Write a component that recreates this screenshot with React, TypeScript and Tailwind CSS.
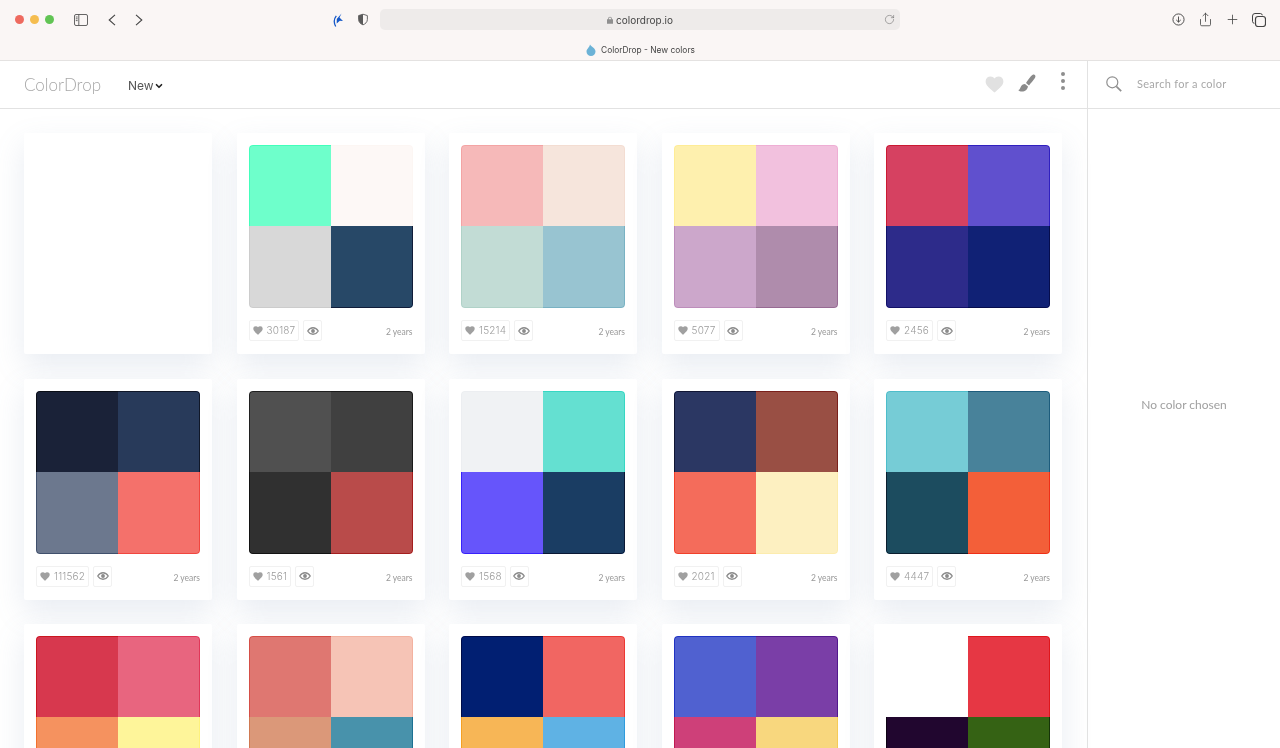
import { ChevronDown, Plus, RotateCw, Share } from 'lucide-react'

type Palette = {
  colors?: string[]
  likes?: string
}

// the third row's footers sit below the fold, so they carry no likes
const palettes: Palette[] = [
  {},
  { colors: ['#6effcb', '#fdf8f6', '#d8d8d8', '#274867'], likes: '30187' },
  { colors: ['#f6b9b9', '#f6e5dc', '#c2dcd5', '#98c4d1'], likes: '15214' },
  { colors: ['#fef0ae', '#f2c1de', '#cca7cb', '#af8cac'], likes: '5077' },
  { colors: ['#d64161', '#6050ce', '#2d2b8a', '#102175'], likes: '2456' },
  { colors: ['#1a2238', '#283a5a', '#6c788e', '#f4716b'], likes: '111562' },
  { colors: ['#505050', '#404040', '#303030', '#b94b4a'], likes: '1561' },
  { colors: ['#f0f2f4', '#64e0d1', '#6655fb', '#1a3d63'], likes: '1568' },
  { colors: ['#2b3763', '#994f44', '#f46c5b', '#fdf0c1'], likes: '2021' },
  { colors: ['#76ccd6', '#48829a', '#1c4c5f', '#f35f39'], likes: '4447' },
  { colors: ['#d7384e', '#e8657f', '#f5925f', '#fef59a'] },
  { colors: ['#df7771', '#f6c4b6', '#db9879', '#4892ab'] },
  { colors: ['#011f72', '#f16662', '#f7b656', '#5fb2e4'] },
  { colors: ['#5061d0', '#7a3ea7', '#ce4079', '#f8d77e'] },
  { colors: ['#ffffff', '#e63744', '#21062f', '#356214'] },
]

function Heart({ className }: { className: string }) {
  return (
    <svg viewBox="0 0 24 22" className={className} fill="currentColor">
      <path d="M12 21.500 10.300 20C4.500 14.900 0.500 11.400 0.500 7A6.300 6.300 0 0 1 7 0.500c2 0 3.900 1 5 2.600 1.100-1.600 3-2.600 5-2.600A6.300 6.300 0 0 1 23.500 7c0 4.400-4 7.900-9.800 13z" />
    </svg>
  )
}

function Eye() {
  return (
    <svg viewBox="0 0 24 24" className="w-[12px] h-[12px] text-[#8c8c8c]" fill="none" stroke="currentColor" strokeWidth="2.6">
      <path d="M1.500 12S5.500 5.500 12 5.500 22.500 12 22.500 12 18.500 18.500 12 18.500 1.500 12 1.500 12z" />
      <circle cx="12" cy="12" r="2.500" fill="currentColor" />
    </svg>
  )
}

function PaletteCard({ palette }: { palette: Palette }) {
  return (
    <div className="h-[221px] bg-white rounded-[2px] px-3 pt-3 shadow-[0_12px_30px_rgba(120,140,180,0.17)]">
      {palette.colors && (
        <div className="relative grid grid-cols-2 grid-rows-[81px_82px] rounded-[4px] overflow-hidden after:absolute after:inset-0 after:rounded-[4px] after:mix-blend-color-burn after:shadow-[inset_0_0_0_1px_rgba(170,170,170,0.6)]">
          {palette.colors.map((color) => (
            <div key={color} style={{ backgroundColor: color }} />
          ))}
        </div>
      )}
      {palette.likes && (
        <div className="flex items-center mt-[12px]">
          <div className="flex items-center h-[21px] px-[3px] gap-[4px] border border-[#f1f1f1] rounded-[2px] font-['Inter',sans-serif] font-light text-[10px] tracking-[0.2px] text-[#9c9c9c]">
            <Heart className="w-[10px] h-[9px] text-[#a0a0a0]" />
            {palette.likes}
          </div>
          <div className="flex items-center justify-center w-[19px] h-[21px] ml-[4px] border border-[#f1f1f1] rounded-[2px]">
            <Eye />
          </div>
          <span className="ml-auto pt-[4px] text-[8.500px] text-[#999999]">2 years</span>
        </div>
      )}
    </div>
  )
}

function BrowserBar() {
  return (
    <div className="h-[61px] shrink-0 bg-[#faf6f5] border-b border-[#e4e2e1] font-['Inter',sans-serif]">
      <div className="flex items-center h-[39px]">
        <div className="flex items-center gap-[6px] ml-[15px]">
          <span className="w-[9px] h-[9px] rounded-full bg-[#ee6a5f]" />
          <span className="w-[9px] h-[9px] rounded-full bg-[#f5bd4f]" />
          <span className="w-[9px] h-[9px] rounded-full bg-[#61c454]" />
        </div>
        <svg viewBox="0 0 14 12" className="w-[14px] h-[12px] ml-[20px] text-[#555555]" fill="none" stroke="currentColor" strokeWidth="0.9">
          <rect x="0.500" y="0.500" width="13" height="11" rx="1.500" />
          <path d="M4.800 0.500v11M1.800 3h1.800M1.800 4.800h1.800M1.800 6.600h1.800" />
        </svg>
        <svg viewBox="0 0 8 12" className="w-[8px] h-[12px] ml-[20px] text-[#444444]" fill="none" stroke="currentColor" strokeWidth="1.100">
          <path d="M7 0.800 1.200 6 7 11.200" />
        </svg>
        <svg viewBox="0 0 8 12" className="w-[8px] h-[12px] ml-[19px] text-[#444444]" fill="none" stroke="currentColor" strokeWidth="1.100">
          <path d="M1 0.800 6.800 6 1 11.200" />
        </svg>
        <svg viewBox="0 0 10 14" className="w-[10px] h-[14px] ml-[190px] text-[#1458c8]" fill="currentColor">
          <path d="M8.500 0.500 6.500 4.500 10 8 6.800 7.800 3.700 10.500 3.800 6z" />
          <path d="M3.300 2.800Q-0.500 7.500 2.700 13.500" fill="none" stroke="currentColor" strokeWidth="1.300" />
        </svg>
        <svg viewBox="0 0 11 13" className="w-[10px] h-[13px] ml-[15px] text-[#5a5a5a]">
          <path d="M5.500 0.700 10.300 2.200V6.500c0 2.900-2.300 4.900-4.800 5.900C3 11.400 0.700 9.400 0.700 6.500V2.200z" fill="none" stroke="currentColor" strokeWidth="1" />
          <path d="M5.500 0.700 0.700 2.200V6.500c0 2.900 2.300 4.900 4.800 5.900z" fill="currentColor" />
        </svg>
        <div className="flex items-center justify-center relative w-[520px] h-[21px] ml-[12px] pt-[1px] rounded-[5px] bg-[#eeebea] text-[10px] text-[#444444]">
          <svg viewBox="0 0 8 10" className="w-[6px] h-[8px] mr-[3px] text-[#8f8f8f]" fill="currentColor">
            <path d="M1.500 4V3a2.500 2.500 0 0 1 5 0v1H8v6H0V4zm1 0h3V3a1.500 1.500 0 0 0-3 0z" />
          </svg>
          colordrop.io
          <RotateCw className="absolute right-[5px] top-[5px] w-[11px] h-[11px] text-[#666666]" strokeWidth={1.200} />
        </div>
        <svg viewBox="0 0 14 14" className="w-[13px] h-[13px] ml-auto text-[#444444]" fill="none" stroke="currentColor" strokeWidth="1">
          <circle cx="7" cy="7" r="6" />
          <path d="M7 3.800v6M4.600 7.500 7 9.800l2.400-2.300" />
        </svg>
        <Share className="w-[15px] h-[15px] ml-[13px] text-[#444444]" strokeWidth={1.300} />
        <Plus className="w-[15px] h-[15px] ml-[12px] text-[#444444]" strokeWidth={1.300} />
        <svg viewBox="0 0 14 14" className="w-[14px] h-[14px] ml-[12px] mr-[14px] text-[#444444]" fill="none" stroke="currentColor" strokeWidth="1">
          <rect x="3.500" y="3.500" width="10" height="10" rx="2.500" strokeWidth="1.200" />
          <path d="M2.300 10.300A2 2 0 0 1 0.500 8.300V3a2.500 2.500 0 0 1 2.500-2.500h5.300a2 2 0 0 1 2 1.800" />
        </svg>
      </div>
      <div className="flex items-center justify-center h-[21px] pt-[1px] pl-[1px] text-[8.400px] text-[#444444]">
        <svg viewBox="0 0 10 12" className="w-[10px] h-[12px] mr-[5px] text-[#6bb2d6]" fill="currentColor">
          <path d="M4 0.500C5 2.500 9.500 4 9.500 7.500a4.500 4.500 0 0 1-9 0C0.500 5 3.500 3.500 4 0.500z" />
        </svg>
        ColorDrop - New colors
      </div>
    </div>
  )
}

function Brush() {
  return (
    <svg viewBox="0 0 18 18" className="w-[18px] h-[18px] text-[#8a8a8a]" fill="currentColor">
      <path d="M15.200 0.500c1.500-.3 2.500.9 2.200 2.300C16.800 5 13 9 11 11.500L8 9c2-3 5-7.500 7.200-8.500z" />
      <path d="M7 10 10 12.500C9.500 15.500 7 17.500 4 17.500 2.500 17.500 1 17 0.300 16 1.800 15.800 2 14.500 2.700 13 3.500 11 5 10.200 7 10z" />
    </svg>
  )
}

function Navbar() {
  return (
    <div className="flex items-center h-[48px] shrink-0 border-b border-[#e2e2e2] pl-[24px] font-['Lato',sans-serif]">
      <span className="text-[17px] font-light text-[#a8a8a8]">ColorDrop</span>
      <span className="ml-[27px] mt-[2px] text-[12px] text-[#555555] font-['Inter',sans-serif]">New</span>
      <ChevronDown className="w-[10px] h-[10px] mt-[3px] text-[#222222]" strokeWidth={4} />
      <Heart className="w-[19px] h-[17px] ml-auto -mt-[1px] text-[#e1e1e1]" />
      <div className="ml-[14px] mb-[3px]">
        <Brush />
      </div>
      <div className="flex flex-col gap-[3px] ml-[25px] mr-[22px] mb-[8px]">
        <span className="w-[4px] h-[4px] rounded-full bg-[#8e8e8e]" />
        <span className="w-[4px] h-[4px] rounded-full bg-[#8e8e8e]" />
        <span className="w-[4px] h-[4px] rounded-full bg-[#8e8e8e]" />
      </div>
    </div>
  )
}

function Sidebar() {
  return (
    <div className="flex flex-col w-[193px] shrink-0 border-l border-[#e2e2e2] font-['Lato',sans-serif]">
      <div className="flex items-center h-[48px] shrink-0 border-b border-[#e2e2e2] pl-[18px]">
        <svg viewBox="0 0 16 16" className="w-[16px] h-[16px] -mt-[2px] text-[#8f8f8f]" fill="none" stroke="currentColor" strokeWidth="1.200">
          <circle cx="6.300" cy="6.300" r="5.500" />
          <path d="M10.300 10.300 15.200 15.200" strokeWidth="1.700" />
        </svg>
        <span className="ml-[15px] text-[11px] tracking-[0.3px] text-[#a8a8a8]">Search for a color</span>
      </div>
      <div className="pt-[287px] text-center text-[12px] text-[#a0a0a0]">No color chosen</div>
    </div>
  )
}

export default function App() {
  return (
    <div className="flex flex-col h-[748px] w-[1280px] overflow-hidden bg-white">
      <BrowserBar />
      <div className="flex flex-1 min-h-0">
        <div className="flex flex-col flex-1 min-w-0">
          <Navbar />
          <div className="grid grid-cols-[repeat(5,188px)] gap-x-[24.500px] gap-y-[24.500px] pt-[24px] pl-[24px] font-['Lato',sans-serif]">
            {palettes.map((palette, index) => (
              <PaletteCard key={index} palette={palette} />
            ))}
          </div>
        </div>
        <Sidebar />
      </div>
    </div>
  )
}
